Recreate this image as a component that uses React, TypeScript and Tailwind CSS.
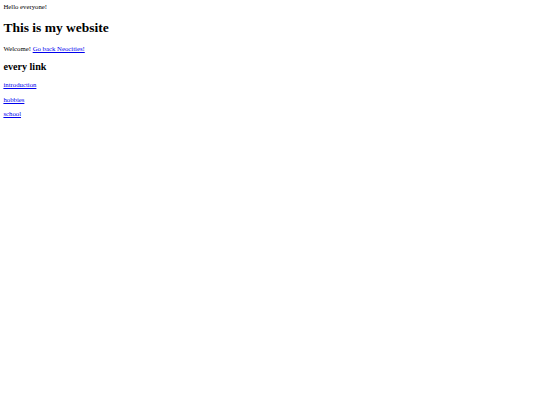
import React from 'react';

const App = () => {
  return (
    <div className="min-h-[405px] bg-white p-[3.4px] font-['Liberation_Serif',serif] text-[6.75px] leading-[7.8px] text-black">
      Hello everyone!
      <h1 className="my-[9.05px] text-[13.5px] font-bold leading-[15.6px]">This is my website</h1>
      <p className="my-[6.75px]">
        Welcome!{' '}
        <a href="#" className="text-[#0000ee] underline">
          Go back Neocities!
        </a>
      </p>
      <h2 className="my-[8.4px] text-[10.13px] font-bold leading-[11.65px]">every link</h2>
      <p className="my-[6.75px]">
        <a href="#" className="text-[#0000ee] underline">introduction</a>
      </p>
      <p className="my-[6.75px]">
        <a href="#" className="text-[#0000ee] underline">hobbies</a>
      </p>
      <p className="my-[6.75px]">
        <a href="#" className="text-[#0000ee] underline">school</a>
      </p>
    </div>
  );
};

export default App;
